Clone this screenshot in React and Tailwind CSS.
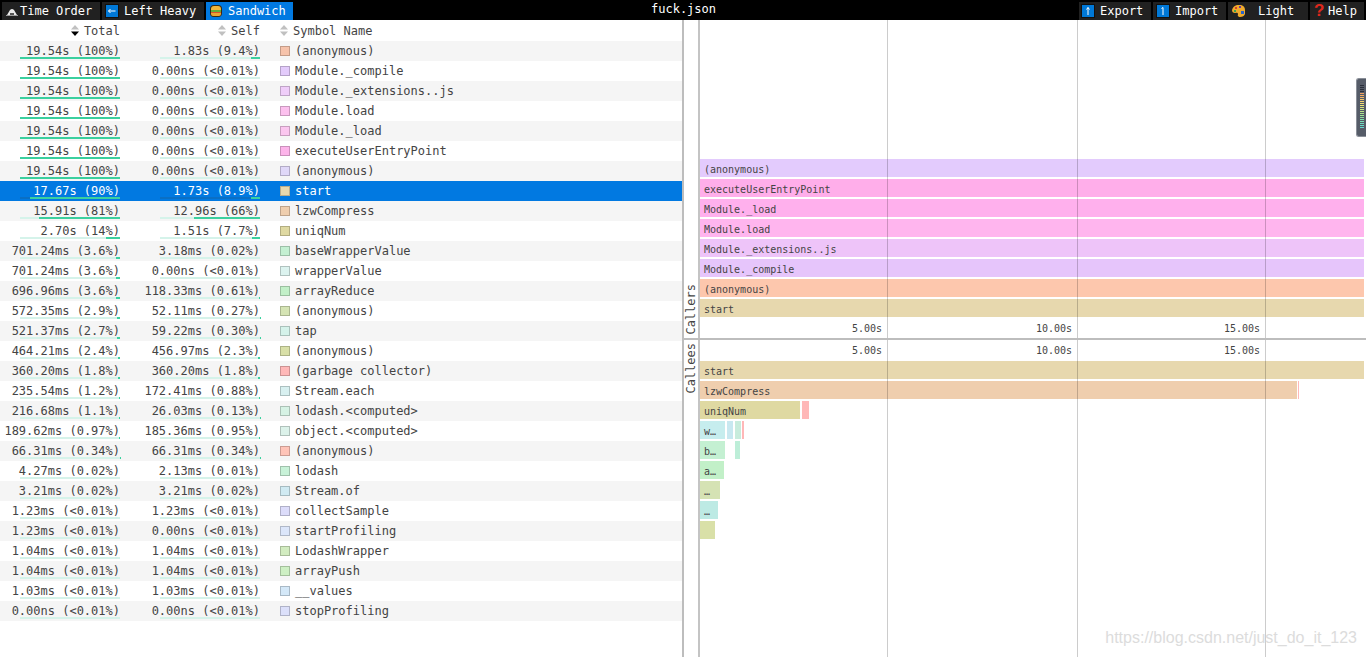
import React from 'react';

const rows = [
  { total: '19.54s (100%)', totalPct: 100, self: '1.83s (9.4%)', selfPct: 9.4, name: '(anonymous)', swatch: 'bg-[#f6c3ab]' },
  { total: '19.54s (100%)', totalPct: 100, self: '0.00ns (<0.01%)', selfPct: 0, name: 'Module._compile', swatch: 'bg-[#e3cbfb]' },
  { total: '19.54s (100%)', totalPct: 100, self: '0.00ns (<0.01%)', selfPct: 0, name: 'Module._extensions..js', swatch: 'bg-[#efcdf9]' },
  { total: '19.54s (100%)', totalPct: 100, self: '0.00ns (<0.01%)', selfPct: 0, name: 'Module.load', swatch: 'bg-[#fcc0ee]' },
  { total: '19.54s (100%)', totalPct: 100, self: '0.00ns (<0.01%)', selfPct: 0, name: 'Module._load', swatch: 'bg-[#fbc6ef]' },
  { total: '19.54s (100%)', totalPct: 100, self: '0.00ns (<0.01%)', selfPct: 0, name: 'executeUserEntryPoint', swatch: 'bg-[#fdb4ea]' },
  { total: '19.54s (100%)', totalPct: 100, self: '0.00ns (<0.01%)', selfPct: 0, name: '(anonymous)', swatch: 'bg-[#e0d8f8]' },
  { total: '17.67s (90%)', totalPct: 90, self: '1.73s (8.9%)', selfPct: 8.9, name: 'start', swatch: 'bg-[#e7d8ae]', active: true },
  { total: '15.91s (81%)', totalPct: 81, self: '12.96s (66%)', selfPct: 66, name: 'lzwCompress', swatch: 'bg-[#efceae]' },
  { total: '2.70s (14%)', totalPct: 14, self: '1.51s (7.7%)', selfPct: 7.7, name: 'uniqNum', swatch: 'bg-[#dfd9a2]' },
  { total: '701.24ms (3.6%)', totalPct: 3.6, self: '3.18ms (0.02%)', selfPct: 0, name: 'baseWrapperValue', swatch: 'bg-[#c4f0d2]' },
  { total: '701.24ms (3.6%)', totalPct: 3.6, self: '0.00ns (<0.01%)', selfPct: 0, name: 'wrapperValue', swatch: 'bg-[#dcf3ef]' },
  { total: '696.96ms (3.6%)', totalPct: 3.6, self: '118.33ms (0.61%)', selfPct: 0.6, name: 'arrayReduce', swatch: 'bg-[#c2f0c8]' },
  { total: '572.35ms (2.9%)', totalPct: 2.9, self: '52.11ms (0.27%)', selfPct: 0.3, name: '(anonymous)', swatch: 'bg-[#d5e4b4]' },
  { total: '521.37ms (2.7%)', totalPct: 2.7, self: '59.22ms (0.30%)', selfPct: 0.3, name: 'tap', swatch: 'bg-[#d5f2ea]' },
  { total: '464.21ms (2.4%)', totalPct: 2.4, self: '456.97ms (2.3%)', selfPct: 2.3, name: '(anonymous)', swatch: 'bg-[#d9e0a8]' },
  { total: '360.20ms (1.8%)', totalPct: 1.8, self: '360.20ms (1.8%)', selfPct: 1.8, name: '(garbage collector)', swatch: 'bg-[#ffb8b8]' },
  { total: '235.54ms (1.2%)', totalPct: 1.2, self: '172.41ms (0.88%)', selfPct: 0.9, name: 'Stream.each', swatch: 'bg-[#d8f0f0]' },
  { total: '216.68ms (1.1%)', totalPct: 1.1, self: '26.03ms (0.13%)', selfPct: 0.1, name: 'lodash.<computed>', swatch: 'bg-[#d6f2e4]' },
  { total: '189.62ms (0.97%)', totalPct: 1, self: '185.36ms (0.95%)', selfPct: 1, name: 'object.<computed>', swatch: 'bg-[#dcf2ea]' },
  { total: '66.31ms (0.34%)', totalPct: 0.3, self: '66.31ms (0.34%)', selfPct: 0.3, name: '(anonymous)', swatch: 'bg-[#ffc4b8]' },
  { total: '4.27ms (0.02%)', totalPct: 0, self: '2.13ms (0.01%)', selfPct: 0, name: 'lodash', swatch: 'bg-[#c8f2d8]' },
  { total: '3.21ms (0.02%)', totalPct: 0, self: '3.21ms (0.02%)', selfPct: 0, name: 'Stream.of', swatch: 'bg-[#d0eaf2]' },
  { total: '1.23ms (<0.01%)', totalPct: 0, self: '1.23ms (<0.01%)', selfPct: 0, name: 'collectSample', swatch: 'bg-[#dcdcfa]' },
  { total: '1.23ms (<0.01%)', totalPct: 0, self: '0.00ns (<0.01%)', selfPct: 0, name: 'startProfiling', swatch: 'bg-[#dce6fa]' },
  { total: '1.04ms (<0.01%)', totalPct: 0, self: '1.04ms (<0.01%)', selfPct: 0, name: 'LodashWrapper', swatch: 'bg-[#d2ecc0]' },
  { total: '1.04ms (<0.01%)', totalPct: 0, self: '1.04ms (<0.01%)', selfPct: 0, name: 'arrayPush', swatch: 'bg-[#cef0c4]' },
  { total: '1.03ms (<0.01%)', totalPct: 0, self: '1.03ms (<0.01%)', selfPct: 0, name: '__values', swatch: 'bg-[#d4e8f8]' },
  { total: '0.00ns (<0.01%)', totalPct: 0, self: '0.00ns (<0.01%)', selfPct: 0, name: 'stopProfiling', swatch: 'bg-[#dce0fa]' },
];

const callers = [
  { name: '(anonymous)', color: 'bg-[#e3cbfd]' },
  { name: 'executeUserEntryPoint', color: 'bg-[#ffaeea]' },
  { name: 'Module._load', color: 'bg-[#ffb0ed]' },
  { name: 'Module.load', color: 'bg-[#ffb5ee]' },
  { name: 'Module._extensions..js', color: 'bg-[#eec4f9]' },
  { name: 'Module._compile', color: 'bg-[#e6c5fb]' },
  { name: '(anonymous)', color: 'bg-[#fdc7ad]' },
  { name: 'start', color: 'bg-[#e7d8ae]' },
];

// one entry per row, each segment carries its own width and left gap
const callees = [
  [{ w: 'flex-1', color: 'bg-[#e7d8ae]', name: 'start' }],
  [
    { w: 'w-[597px]', color: 'bg-[#efceae]', name: 'lzwCompress' },
    { w: 'w-[1px] ml-[1px]', color: 'bg-[#ffb8b8]' },
  ],
  [
    { w: 'w-[100px]', color: 'bg-[#dfd9a2]', name: 'uniqNum' },
    { w: 'w-[7px] ml-[2px]', color: 'bg-[#ffb8b8]' },
  ],
  [
    { w: 'w-[25px]', color: 'bg-[#c6edee]', name: 'w…' },
    { w: 'w-[6px] ml-[2px]', color: 'bg-[#c8e8f0]' },
    { w: 'w-[6px] ml-[2px]', color: 'bg-[#c8ecdc]' },
    { w: 'w-[2px] ml-[1px]', color: 'bg-[#ffb8b8]' },
  ],
  [
    { w: 'w-[25px]', color: 'bg-[#c4f0d2]', name: 'b…' },
    { w: 'w-[5px] ml-[10px]', color: 'bg-[#bdeed8]' },
  ],
  [{ w: 'w-[24px]', color: 'bg-[#c2f0c8]', name: 'a…' }],
  [{ w: 'w-[20px]', color: 'bg-[#d5e2b4]', name: '…' }],
  [{ w: 'w-[18px]', color: 'bg-[#bdeae4]', name: '…' }],
  [{ w: 'w-[15px]', color: 'bg-[#d9e0a8]' }],
];

const meterLines = [
  'bg-[#2a2f3a]', 'bg-[#2a2f3a]', 'bg-[#2a2f3a]', 'bg-[#2a2f3a]',
  'bg-[#f0a060]', 'bg-[#f2ac62]', 'bg-[#f4b866]', 'bg-[#f5c66a]', 'bg-[#f5d26e]', 'bg-[#f2dc72]',
  'bg-[#e8e276]', 'bg-[#dae47c]', 'bg-[#cbe482]', 'bg-[#bce488]', 'bg-[#ace48e]', 'bg-[#9de496]',
  'bg-[#8fe2a0]', 'bg-[#82e0aa]', 'bg-[#78deb4]', 'bg-[#70dcbe]', 'bg-[#6adac6]', 'bg-[#66d8cc]',
];

const BlueSquare = ({ children }) => (
  <svg width="14" height="14" viewBox="0 0 14 14" className="shrink-0">
    <rect x="0.5" y="0.5" width="13" height="13" fill="#0078d7" stroke="#111" />
    {children}
  </svg>
);

const MountainIcon = () => (
  <svg width="14" height="12" viewBox="0 0 14 12" className="shrink-0">
    <path d="M2 10 L5 5 Q7 3 9 5 L12 10 Z" fill="#e8e8e8" />
    <path d="M1 10 H13 V11 H1 Z" fill="#9a9a9a" />
    <path d="M5 8 H9 V10 H5 Z" fill="#555" />
  </svg>
);

const SandwichIcon = () => (
  <svg width="14" height="14" viewBox="0 0 14 14" className="shrink-0">
    <rect x="1" y="1" width="12" height="12" rx="4" fill="#3a2a10" />
    <path d="M2 5 Q2 2 5 2 H9 Q12 2 12 5 V6 H2 Z" fill="#eeb53c" />
    <rect x="2" y="6" width="10" height="2" fill="#5fae3a" />
    <rect x="2" y="8" width="10" height="1" fill="#d9532c" />
    <path d="M2 9 H12 V10 Q12 12 10 12 H4 Q2 12 2 10 Z" fill="#e9a534" />
  </svg>
);

const PaletteIcon = () => (
  <svg width="13" height="12" viewBox="0 0 13 12" className="shrink-0">
    <path d="M5 0 H9 Q13 1 13 5 V9 Q12 12 8 12 H7 Q5 11 6 9 Q6 7 3 8 Q0 8 0 5 Q1 1 5 0 Z" fill="#efaa2c" />
    <rect x="3" y="2" width="2" height="2" fill="#d9402a" />
    <rect x="7" y="1" width="2" height="2" fill="#6a3d9a" />
    <rect x="2" y="5" width="2" height="2" fill="#3fa34d" />
    <rect x="9" y="6" width="3" height="3" fill="#2a63c9" />
  </svg>
);

const SortArrows = ({ active }) => (
  <svg width="8" height="11" viewBox="0 0 8 11" className="shrink-0">
    <path d="M4 0 L8 4.5 H0 Z" fill="#c0c0c0" />
    <path d="M4 11 L8 6.5 H0 Z" fill={active ? '#000' : '#c0c0c0'} />
  </svg>
);

const NavButton = ({ className, icon, label, textClass }) => (
  <div className={`flex h-[18px] items-center text-white ${className}`}>
    {icon}
    <span className={textClass}>{label}</span>
  </div>
);

const Meter = ({ pct, active }) => (
  <div className={`absolute bottom-[2px] right-0 h-[2px] w-[100px] ${active ? 'bg-[#0a6fc4]' : 'bg-[#d5f3ea]'}`}>
    <div className="absolute right-0 top-0 h-[2px] bg-[#3bd09f]" style={{ width: `${pct}%` }} />
  </div>
);

const Row = ({ row, index }) => {
  const bg = row.active ? 'bg-[#0179e1] text-white' : index % 2 === 0 ? 'bg-[#f5f5f5] text-[#444]' : 'bg-white text-[#444]';
  return (
    <div className={`flex h-5 items-center whitespace-pre ${bg}`}>
      <div className="relative h-5 w-[120px] text-right leading-5">
        {row.total}
        <Meter pct={row.totalPct} active={row.active} />
      </div>
      <div className="relative h-5 w-[140px] text-right leading-5">
        {row.self}
        <Meter pct={row.selfPct} active={row.active} />
      </div>
      <div className={`ml-5 h-[10px] w-[10px] border border-black/20 ${row.swatch}`} />
      <span className="ml-[5px]">{row.name}</span>
    </div>
  );
};

const Bar = ({ className, name }) => (
  <div className={`h-[18px] overflow-hidden whitespace-pre text-[10px] leading-[22px] text-[#444] ${name ? 'pl-1' : ''} ${className}`}>
    {name}
  </div>
);

const Axis = ({ className }) => (
  <div className={`flex items-center text-[10px] text-[#444] ${className}`}>
    <div className="w-[187px] pr-[5px] text-right">5.00s</div>
    <div className="w-[190px] pr-[5px] text-right">10.00s</div>
    <div className="w-[188px] pr-[5px] text-right">15.00s</div>
  </div>
);

const GridLines = () => (
  <>
    <div className="absolute inset-y-0 left-[187px] w-px bg-black/20" />
    <div className="absolute inset-y-0 left-[377px] w-px bg-black/20" />
    <div className="absolute inset-y-0 left-[565px] w-px bg-black/20" />
  </>
);

const SideLabel = ({ children, className }) => (
  <div className={`flex w-[14px] shrink-0 items-center ${className}`}>
    <span className="text-[12px] leading-[14px] text-[#444] [writing-mode:vertical-rl] rotate-180">{children}</span>
  </div>
);

export default function App() {
  return (
    <div className="relative flex h-[657px] w-[1366px] flex-col overflow-hidden bg-white font-['DejaVu_Sans_Mono',monospace] text-[12px]">
      <header className="flex h-5 shrink-0 items-end bg-black text-[12px]">
        <div className="flex items-end gap-[2px] pl-[2px]">
          <NavButton className="w-[98px] bg-[#212121] pl-[3px]" icon={<MountainIcon />} label="Time Order" textClass="ml-[1px]" />
          <NavButton
            className="w-[102px] bg-[#212121] pl-[3px]"
            icon={
              <BlueSquare>
                <path d="M3.5 7 H10.5 M3.5 7 L5.5 5 M3.5 7 L5.5 9" stroke="#fff" fill="none" />
              </BlueSquare>
            }
            label="Left Heavy"
            textClass="ml-[5px]"
          />
          <NavButton className="w-[87px] bg-[#0179e1] pl-[3px]" icon={<SandwichIcon />} label="Sandwich" textClass="ml-[5px]" />
        </div>
        <div className="h-[18px] flex-1 pr-[5px] text-center leading-[14px] text-white">fuck.json</div>
        <div className="flex items-end gap-[2px] pr-[2px]">
          <NavButton
            className="w-[72px] bg-[#212121] pl-[2px]"
            icon={
              <BlueSquare>
                <path d="M7 3.5 V11 M7 3.5 L5.5 5.5 M7 3.5 L8.5 5.5" stroke="#fff" fill="none" />
              </BlueSquare>
            }
            label="Export"
            textClass="ml-[5px]"
          />
          <NavButton
            className="w-[73px] bg-[#212121] pl-[3px]"
            icon={
              <BlueSquare>
                <path d="M7 3.5 V11 M7 3.5 L5.5 4.5" stroke="#fff" fill="none" />
              </BlueSquare>
            }
            label="Import"
            textClass="ml-[5px]"
          />
          <NavButton className="w-[80px] bg-[#212121] pl-[4px]" icon={<PaletteIcon />} label="Light" textClass="ml-[13px]" />
          <NavButton
            className="w-[54px] bg-[#212121] pl-[4px]"
            icon={<span className="w-[9px] font-['Liberation_Sans',sans-serif] text-[17px] font-bold leading-[18px] text-[#e0281c]">?</span>}
            label="Help"
            textClass="ml-[5px]"
          />
        </div>
      </header>

      <main className="flex min-h-0 flex-1">
        <section className="w-[682px] shrink-0">
          <div className="flex h-[21px] items-center text-[#444]">
            <div className="flex w-[120px] items-center justify-end gap-[5px]">
              <SortArrows active />
              <span>Total</span>
            </div>
            <div className="flex w-[140px] items-center justify-end gap-[5px]">
              <SortArrows />
              <span>Self</span>
            </div>
            <div className="ml-5 flex items-center gap-[5px]">
              <SortArrows />
              <span>Symbol Name</span>
            </div>
          </div>
          {rows.map((row, i) => (
            <Row key={i} row={row} index={i} />
          ))}
        </section>

        <div className="w-[2px] shrink-0 bg-[#bdbdbd]" />

        <section className="flex min-w-0 flex-1 flex-col">
          <div className="flex h-[318px] shrink-0">
            <SideLabel className="justify-center self-end pb-[3px]">Callers</SideLabel>
            <div className="w-[2px] shrink-0 bg-[#c4c4c4]" />
            <div className="relative flex-1 pr-[2px] pt-[139px]">
              {callers.map((bar, i) => (
                <div key={i} className="mb-[2px]">
                  <Bar className={bar.color} name={bar.name} />
                </div>
              ))}
              <Axis className="h-[19px]" />
              <GridLines />
            </div>
          </div>

          <div className="h-[2px] shrink-0 bg-[#bdbdbd]" />

          <div className="flex min-h-0 flex-1">
            <SideLabel className="justify-center self-start pt-[3px]">Callees</SideLabel>
            <div className="w-[2px] shrink-0 bg-[#c4c4c4]" />
            <div className="relative flex-1 pr-[2px]">
              <Axis className="h-[21px]" />
              {callees.map((segments, i) => (
                <div key={i} className="mb-[2px] flex">
                  {segments.map((seg, j) => (
                    <Bar key={j} className={`${seg.w} ${seg.color}`} name={seg.name} />
                  ))}
                </div>
              ))}
              <GridLines />
            </div>
          </div>
        </section>
      </main>

      {/* browser extension handle sitting on top of the page */}
      <div className="absolute right-0 top-[78px] flex h-[59px] w-[10px] flex-col gap-px rounded-l-[3px] border border-r-0 border-[#8a8f98] bg-[#565c68] pl-[3px] pt-[6px]">
        {meterLines.map((line, i) => (
          <div key={i} className={`h-[1px] w-[4px] shrink-0 ${line}`} />
        ))}
      </div>

      <div className="absolute right-[9px] top-[628px] font-['Liberation_Sans',sans-serif] text-[16px] leading-[20px] text-[#dcdcdc]">
        https://blog.csdn.net/just_do_it_123
      </div>
    </div>
  );
}
